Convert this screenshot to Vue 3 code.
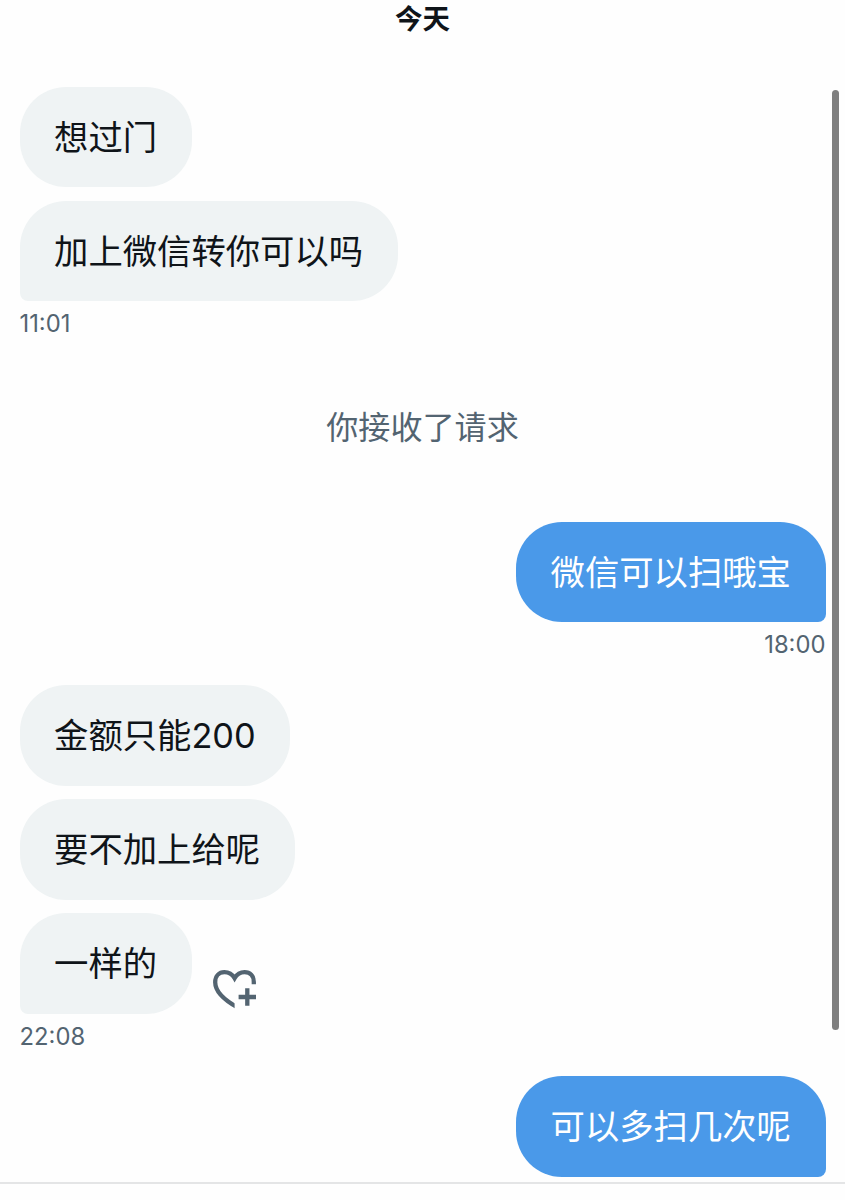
<script setup>
import { ref } from "vue";

const groups = ref([
  { id: 1, mine: false, time: "11:01", messages: ["想过门", "加上微信转你可以吗"] },
  { id: 2, notice: "你接收了请求" },
  { id: 3, mine: true, time: "18:00", messages: ["微信可以扫哦宝"] },
  { id: 4, mine: false, time: "22:08", react: true, messages: ["金额只能200", "要不加上给呢", "一样的"] },
  { id: 5, mine: true, messages: ["可以多扫几次呢"] },
]);
</script>

<template>
  <div class="chat">
    <div class="thread">
      <h2 class="day">今天</h2>

      <template v-for="group in groups" :key="group.id">
        <p v-if="group.notice" class="notice">{{ group.notice }}</p>

        <section v-else class="group" :class="{ mine: group.mine }">
          <div v-for="(text, i) in group.messages" :key="i" class="row">
            <div class="bubble" :class="{ last: i === group.messages.length - 1 }">{{ text }}</div>
            <button
              v-if="group.react && i === group.messages.length - 1"
              class="react"
              aria-label="React"
            >
              <svg viewBox="0 0 46 40" width="46" height="40">
                <clipPath id="heart-cut">
                  <path d="M0 0H46V15.2H22.6V40H0Z" />
                </clipPath>
                <path
                  clip-path="url(#heart-cut)"
                  d="M26 38.6C12 30.9 3.2 22.4 3.2 13.2C3.2 7 7 3.2 12.4 3.2C16.8 3.2 20.2 5.2 22.6 9.2C25 5.2 28.2 3.2 32.6 3.2C38 3.2 41.8 7 41.8 13V17"
                />
                <path d="M35.3 19.3V36.7M26.6 28H44" />
              </svg>
            </button>
          </div>
          <time v-if="group.time" class="time">{{ group.time }}</time>
        </section>
      </template>
    </div>

    <div class="scrollbar"></div>
  </div>
</template>

<style>
body {
  margin: 0;
  background: #fff;
}
</style>

<style scoped>
.chat {
  position: relative;
  height: 1200px;
  overflow: hidden;
  background: #fefefe;
  color: #0f1419;
  font-family: Inter, "Noto Sans CJK SC", sans-serif;
}

.thread {
  box-sizing: border-box;
  height: 1184px;
  padding: 0 19.5px;
  border-bottom: 2px solid #e4e5e6;
}

.day {
  height: 36px;
  margin: 0 0 50.8px;
  font-size: 27.5px;
  line-height: 38px;
  font-weight: 700;
  text-align: center;
}

.group {
  display: flex;
  flex-direction: column;
  align-items: flex-start;
}

.group.mine {
  align-items: flex-end;
}

.row {
  display: flex;
  align-items: flex-end;
}

.row + .row {
  margin-top: 13.3px;
}

.bubble {
  height: 100.7px;
  padding: 0 34.6px;
  border-radius: 46px;
  background: #eff3f4;
  font-size: 34.33px;
  line-height: 101px;
  white-space: nowrap;
}

.bubble.last {
  border-bottom-left-radius: 8px;
}

.mine .bubble {
  background: #4a99e9;
  color: #fff;
}

.mine .bubble.last {
  border-bottom-left-radius: 46px;
  border-bottom-right-radius: 8px;
}

.react {
  height: 40px;
  margin: 0 0 5px 20px;
  padding: 0;
  border: none;
  background: none;
}

.react svg {
  display: block;
  fill: none;
  stroke: #536471;
  stroke-width: 4.3;
}

.time {
  height: 62.6px;
  color: #536471;
  font-size: 23.8px;
  line-height: 45px;
}

.notice {
  height: 50px;
  margin: 38.5px 0 69px;
  color: #536471;
  font-size: 32.1px;
  line-height: 49.5px;
  text-align: center;
}

.scrollbar {
  position: absolute;
  top: 90px;
  right: 6px;
  width: 7px;
  height: 940px;
  border-radius: 4px;
  background: #7f7f7f;
}
</style>
